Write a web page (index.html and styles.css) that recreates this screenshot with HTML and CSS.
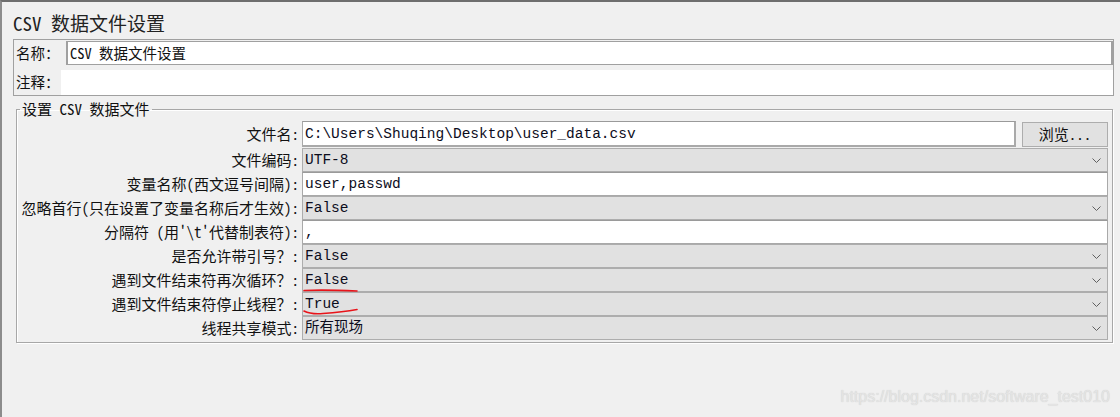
FILE: index.html
```html
<!DOCTYPE html>
<html lang="zh-CN">
<head>
<meta charset="utf-8">
<title>CSV 数据文件设置</title>
<link rel="stylesheet" href="styles.css">
</head>
<body>
<div class="frame">
  <div class="title">CSV 数据文件设置</div>

  <div class="namepanel">
    <div class="name-row">
      <span class="np-label">名称：</span>
      <div class="name-input">CSV 数据文件设置</div>
    </div>
    <div class="comment-row">
      <span class="np-label cm-label">注释：</span>
      <div class="comment-area"></div>
    </div>
  </div>

  <fieldset class="group">
    <legend class="group-title">设置 CSV 数据文件</legend>
    <div class="form">
      <div class="lbl lbl-first">文件名:</div>
      <div class="file-row">
        <div class="field text">C:\Users\Shuqing\Desktop\user_data.csv</div>
        <div class="browse">浏览...</div>
      </div>

      <div class="lbl">文件编码:</div>
      <div class="field combo"><span class="val">UTF-8</span><svg class="chev" width="9" height="5" viewBox="0 0 9 5"><polyline points="0.5,0.5 4.5,4.5 8.5,0.5" fill="none" stroke="#606060" stroke-width="1"/></svg></div>

      <div class="lbl">变量名称(西文逗号间隔):</div>
      <div class="field text">user,passwd</div>

      <div class="lbl">忽略首行(只在设置了变量名称后才生效):</div>
      <div class="field combo"><span class="val">False</span><svg class="chev" width="9" height="5" viewBox="0 0 9 5"><polyline points="0.5,0.5 4.5,4.5 8.5,0.5" fill="none" stroke="#606060" stroke-width="1"/></svg></div>

      <div class="lbl">分隔符 (用'\t'代替制表符):</div>
      <div class="field text">,</div>

      <div class="lbl">是否允许带引号？:</div>
      <div class="field combo"><span class="val">False</span><svg class="chev" width="9" height="5" viewBox="0 0 9 5"><polyline points="0.5,0.5 4.5,4.5 8.5,0.5" fill="none" stroke="#606060" stroke-width="1"/></svg></div>

      <div class="lbl">遇到文件结束符再次循环？:</div>
      <div class="field combo marked"><span class="val">False</span><svg class="chev" width="9" height="5" viewBox="0 0 9 5"><polyline points="0.5,0.5 4.5,4.5 8.5,0.5" fill="none" stroke="#606060" stroke-width="1"/></svg><svg class="redline" width="60" height="8" viewBox="0 0 60 8"><path d="M1 2.5 Q 20 1.5 54 3" fill="none" stroke="#e8141a" stroke-width="1.6" stroke-linecap="round"/></svg></div>

      <div class="lbl">遇到文件结束符停止线程？:</div>
      <div class="field combo marked"><span class="val">True</span><svg class="chev" width="9" height="5" viewBox="0 0 9 5"><polyline points="0.5,0.5 4.5,4.5 8.5,0.5" fill="none" stroke="#606060" stroke-width="1"/></svg><svg class="redline red2" width="60" height="10" viewBox="0 0 60 10"><path d="M1 4 Q 8 7.5 20 6.5 Q 40 5 54 2.5" fill="none" stroke="#e8141a" stroke-width="1.6" stroke-linecap="round"/></svg></div>

      <div class="lbl">线程共享模式:</div>
      <div class="field combo"><span class="val">所有现场</span><svg class="chev" width="9" height="5" viewBox="0 0 9 5"><polyline points="0.5,0.5 4.5,4.5 8.5,0.5" fill="none" stroke="#606060" stroke-width="1"/></svg></div>
    </div>
  </fieldset>

  <div class="watermark">https://blog.csdn.net/software_test010</div>
</div>
</body>
</html>
```

FILE: styles.css
```css
html, body {
  margin: 0;
  padding: 0;
  background: #f0f0f0;
}

.frame {
  position: relative;
  width: 1120px;
  height: 417px;
  box-sizing: border-box;
  border-top: 2px solid #6e6e6e;
  border-left: 2px solid #8c8c8c;
  background: #f0f0f0;
  padding: 0 6px 0 11px;
  font-family: "Noto Sans Mono CJK SC", "Noto Sans CJK SC", "Liberation Mono", monospace;
  color: #111;
  overflow: hidden;
}

.title {
  height: 37px;
  box-sizing: border-box;
  padding-top: 10px;
  font-size: 19px;
  font-weight: 300;
  line-height: 22px;
  color: #222;
  white-space: nowrap;
}

/* name / comment panel */
.namepanel {
  border: 1px solid #a0a0a0;
  padding: 1px 0 0 1px;
}

.name-row {
  display: flex;
  height: 24px;
}

.np-label {
  width: 50px;
  flex: none;
  padding-left: 1px;
  font-size: 14.5px;
  line-height: 24px;
  white-space: nowrap;
}

.name-input {
  flex: 1;
  box-sizing: border-box;
  height: 24px;
  background: #fff;
  border: 1px solid #a0a0a0;
  border-left-width: 2px;
  border-right-width: 2px;
  padding-left: 2px;
  font-size: 14.5px;
  line-height: 22px;
  white-space: nowrap;
}

.comment-row {
  display: flex;
  height: 30px;
}

.cm-label {
  width: 45px;
  padding-top: 5px;
}

.comment-area {
  flex: 1;
  margin-top: 5px;
  height: 25px;
  background: #fff;
}

/* fieldset */
.group {
  margin: 4px 1px 0 3px;
  padding: 3px 4px 2px 0;
  border: 1px solid #a7a7a7;
  box-shadow: inset 1px 1px 0 #fff, 1px 1px 0 #fff;
  min-width: 0;
}

.group-title {
  margin-left: 3px;
  padding: 0 2px;
  font-size: 15px;
  line-height: 18px;
  white-space: nowrap;
}

.form {
  display: grid;
  grid-template-columns: 285px 1fr;
  grid-template-rows: 27px repeat(8, 24px);
}

.lbl {
  text-align: right;
  padding-right: 3px;
  font-size: 15px;
  line-height: 24px;
  white-space: nowrap;
}

.lbl-first {
  line-height: 26px;
}

.file-row {
  display: flex;
  align-items: flex-start;
  height: 26px;
}

.field {
  position: relative;
  box-sizing: border-box;
  height: 24px;
  font-family: "Liberation Mono", "Noto Sans CJK SC", monospace;
  font-size: 14.5px;
  line-height: 22px;
  padding-left: 2px;
  color: #0c0c1c;
  white-space: nowrap;
}

.text {
  background: #fff;
  border: 1px solid #a9a9a9;
  border-top-color: #9a9a9a;
}

.file-row .text {
  flex: 1;
  height: 26px;
  line-height: 24px;
  border-right-width: 2px;
  border-bottom-width: 2px;
}

.browse {
  flex: none;
  box-sizing: border-box;
  width: 86px;
  height: 25px;
  margin: 1px 0 0 6px;
  background: #e1e1e1;
  border: 1px solid #adadad;
  text-align: center;
  font-size: 15px;
  line-height: 22px;
}

.combo {
  display: flex;
  align-items: center;
  justify-content: space-between;
  background: #e1e1e1;
  border: 1px solid #adadad;
}

.val {
  line-height: 22px;
}

.chev {
  flex: none;
  margin-right: 6px;
}

.redline {
  position: absolute;
  left: 0;
  top: 19px;
  overflow: visible;
}

.red2 {
  top: 14px;
}

.watermark {
  position: absolute;
  right: 10px;
  top: 386px;
  font-family: "Liberation Sans", Arial, sans-serif;
  font-size: 16px;
  color: #e4e4e4;
  text-shadow: 0 0 1px #c8c8c8;
  white-space: nowrap;
}
```
